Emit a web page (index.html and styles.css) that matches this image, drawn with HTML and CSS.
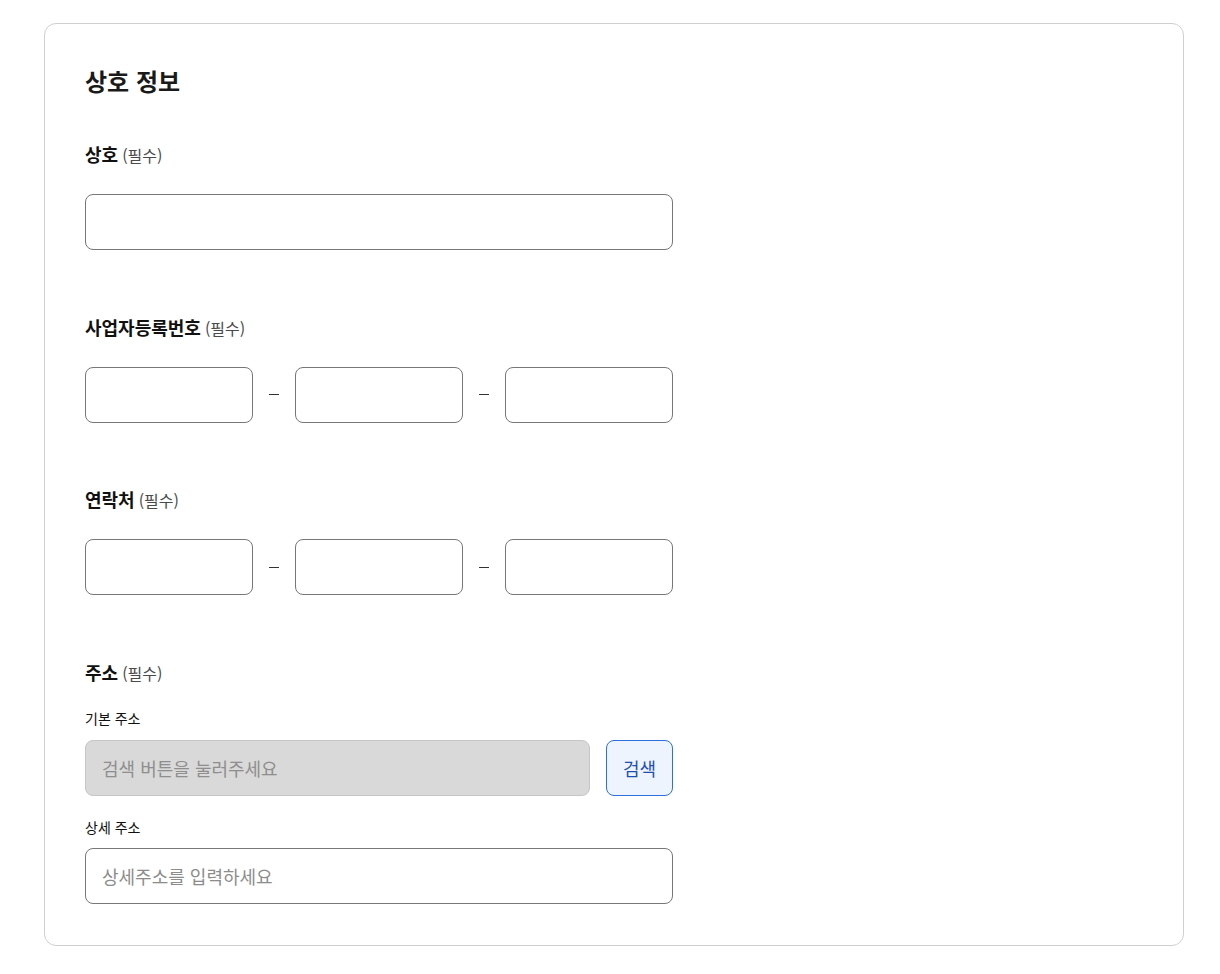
FILE: index.html
```html
<!DOCTYPE html>
<html lang="ko">
<head>
<meta charset="utf-8">
<title>상호 정보</title>
<link rel="stylesheet" href="styles.css">
</head>
<body>
<section class="card">
  <h2 class="title">상호 정보</h2>

  <div class="field">
    <div class="label"><strong>상호</strong><span class="req">(필수)</span></div>
    <input class="input wide" type="text">
  </div>

  <div class="field">
    <div class="label"><strong>사업자등록번호</strong><span class="req">(필수)</span></div>
    <div class="triple">
      <input class="input part" type="text">
      <span class="dash"></span>
      <input class="input part" type="text">
      <span class="dash"></span>
      <input class="input part" type="text">
    </div>
  </div>

  <div class="field">
    <div class="label"><strong>연락처</strong><span class="req">(필수)</span></div>
    <div class="triple">
      <input class="input part" type="text">
      <span class="dash"></span>
      <input class="input part" type="text">
      <span class="dash"></span>
      <input class="input part" type="text">
    </div>
  </div>

  <div class="field last">
    <div class="label"><strong>주소</strong><span class="req">(필수)</span></div>
    <div class="sublabel first">기본 주소</div>
    <div class="search-row">
      <input class="input disabled" type="text" placeholder="검색 버튼을 눌러주세요" disabled>
      <button class="btn" type="button">검색</button>
    </div>
    <div class="sublabel">상세 주소</div>
    <input class="input wide" type="text" placeholder="상세주소를 입력하세요">
  </div>
</section>
</body>
</html>
```

FILE: styles.css
```css
* { box-sizing: border-box; }
body {
  margin: 0;
  padding: 23px 36px 0 44px;
  background: #fff;
  font-family: "Noto Sans CJK KR", "Noto Sans", sans-serif;
  color: #111;
}
.card {
  width: 1140px;
  border: 1px solid #cfcfcf;
  border-radius: 12px;
  padding: 41px 40px 41px;
}
.title {
  margin: 0;
  font-size: 24px;
  line-height: 32px;
  font-weight: 700;
  color: #1a1a1a;
}
.field { margin-top: 44px; }
.field + .field { margin-top: 63.5px; }
.label {
  display: flex;
  align-items: baseline;
  height: 26px;
  font-size: 18px;
  line-height: 26px;
  margin-bottom: 27px;
  color: #111;
}
.label strong { font-weight: 700; line-height: 26px; }
.req {
  margin-left: 4px;
  font-size: 16px;
  line-height: 1;
  color: #4a4a4a;
  font-weight: 400;
}
.input {
  display: block;
  height: 56px;
  border: 1px solid #777;
  border-radius: 8px;
  background: #fff;
  padding: 0 16px;
  font-family: inherit;
  font-size: 18px;
  color: #111;
  outline: none;
}
.input::placeholder { color: #8c8c8c; }
.wide { width: 588px; }
.triple {
  display: flex;
  align-items: center;
  width: 588px;
}
.part { width: 168px; }
.dash {
  width: 42px;
  display: flex;
  justify-content: center;
}
.dash::before {
  content: "";
  display: block;
  width: 10px;
  height: 1px;
  background: #333;
}
.field.last .label { margin-bottom: 23px; }
.sublabel {
  height: 20px;
  font-size: 14px;
  line-height: 20px;
  color: #111;
  margin: 21px 0 11px;
}
.sublabel.first { margin-top: 0; margin-bottom: 12px; }
.search-row {
  display: flex;
  gap: 16px;
  width: 588px;
}
.disabled {
  flex: 1;
  background: #d9d9d9;
  border-color: #c6c6c6;
}
.disabled::placeholder { color: #8e8e8e; }
.btn {
  width: 67px;
  height: 56px;
  border: 1px solid #2e6fe0;
  border-radius: 8px;
  background: #eef4fd;
  color: #1d4fb0;
  font-family: inherit;
  font-size: 18px;
  padding: 0;
  cursor: pointer;
}
```
